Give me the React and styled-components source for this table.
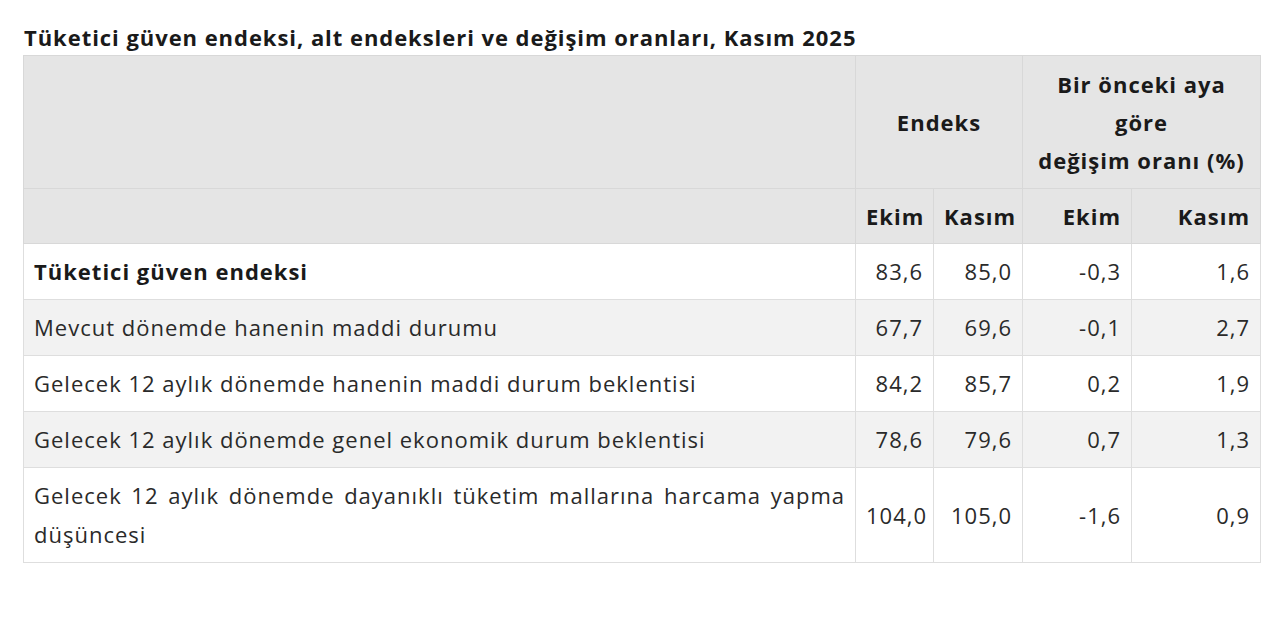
import React from 'react'
import styled, { createGlobalStyle } from 'styled-components'

const GlobalStyle = createGlobalStyle`
  body {
    margin: 0;
    background: #fff;
    font-family: "Open Sans", "Noto Sans", sans-serif;
    color: #222;
  }
`

const rows = [
  { label: 'Tüketici güven endeksi', values: ['83,6', '85,0', '-0,3', '1,6'], bold: true },
  { label: 'Mevcut dönemde hanenin maddi durumu', values: ['67,7', '69,6', '-0,1', '2,7'] },
  { label: 'Gelecek 12 aylık dönemde hanenin maddi durum beklentisi', values: ['84,2', '85,7', '0,2', '1,9'] },
  { label: 'Gelecek 12 aylık dönemde genel ekonomik durum beklentisi', values: ['78,6', '79,6', '0,7', '1,3'] },
  { label: 'Gelecek 12 aylık dönemde dayanıklı tüketim mallarına harcama yapma düşüncesi', values: ['104,0', '105,0', '-1,6', '0,9'] },
]

const App = () => {
  return (
    <Page>
      <GlobalStyle />
      <Title>Tüketici güven endeksi, alt endeksleri ve değişim oranları, Kasım 2025</Title>
      <Table>
        <colgroup>
          <col style={{ width: 832 }} />
          <col style={{ width: 78 }} />
          <col style={{ width: 89 }} />
          <col style={{ width: 109 }} />
          <col style={{ width: 129 }} />
        </colgroup>
        <thead>
          <tr>
            <Th $tall></Th>
            <Th colSpan={2} $tall>Endeks</Th>
            <Th colSpan={2} $tall>Bir önceki aya göre<br />değişim oranı (%)</Th>
          </tr>
          <tr>
            <Th></Th>
            <Th $align="center">Ekim</Th>
            <Th $align="center">Kasım</Th>
            <Th $align="right">Ekim</Th>
            <Th $align="right">Kasım</Th>
          </tr>
        </thead>
        <tbody>
          {rows.map((r, i) => (
            <Row key={i} $even={i % 2 === 1}>
              <Label $bold={r.bold}>{r.label}</Label>
              {r.values.map((v, j) => (
                <Num key={j}>{v}</Num>
              ))}
            </Row>
          ))}
        </tbody>
      </Table>
    </Page>
  )
}

const Page = styled.div`
  padding: 20px 0 0 23px;
  width: 1237px;
`

const Title = styled.h3`
  margin: 0 0 0 1px;
  font-size: 22px;
  line-height: 35px;
  letter-spacing: 0.95px;
  font-weight: 700;
  color: #1a1a1a;
`

const Table = styled.table`
  width: 1238px;
  table-layout: fixed;
  border-collapse: collapse;
  font-size: 22px;
  letter-spacing: 1px;
`

const Th = styled.th`
  background: #e5e5e5;
  border: 1px solid #d8d8d8;
  color: #1a1a1a;
  font-weight: 700;
  line-height: 38px;
  padding: 0 10px;
  text-align: ${p => p.$align || 'center'};
  height: ${p => (p.$tall ? '132px' : '54px')};
  vertical-align: middle;
`

const Row = styled.tr`
  background: ${p => (p.$even ? '#f2f2f2' : '#fff')};
`

const Label = styled.td`
  border: 1px solid #dedede;
  padding: 8px 10px;
  line-height: 39px;
  text-align: justify;
  font-weight: ${p => (p.$bold ? 700 : 400)};
  color: ${p => (p.$bold ? '#1a1a1a' : '#2a2a2a')};
`

const Num = styled.td`
  border: 1px solid #dedede;
  padding: 8px 10px;
  line-height: 39px;
  text-align: right;
  color: #2a2a2a;
`

export default App
